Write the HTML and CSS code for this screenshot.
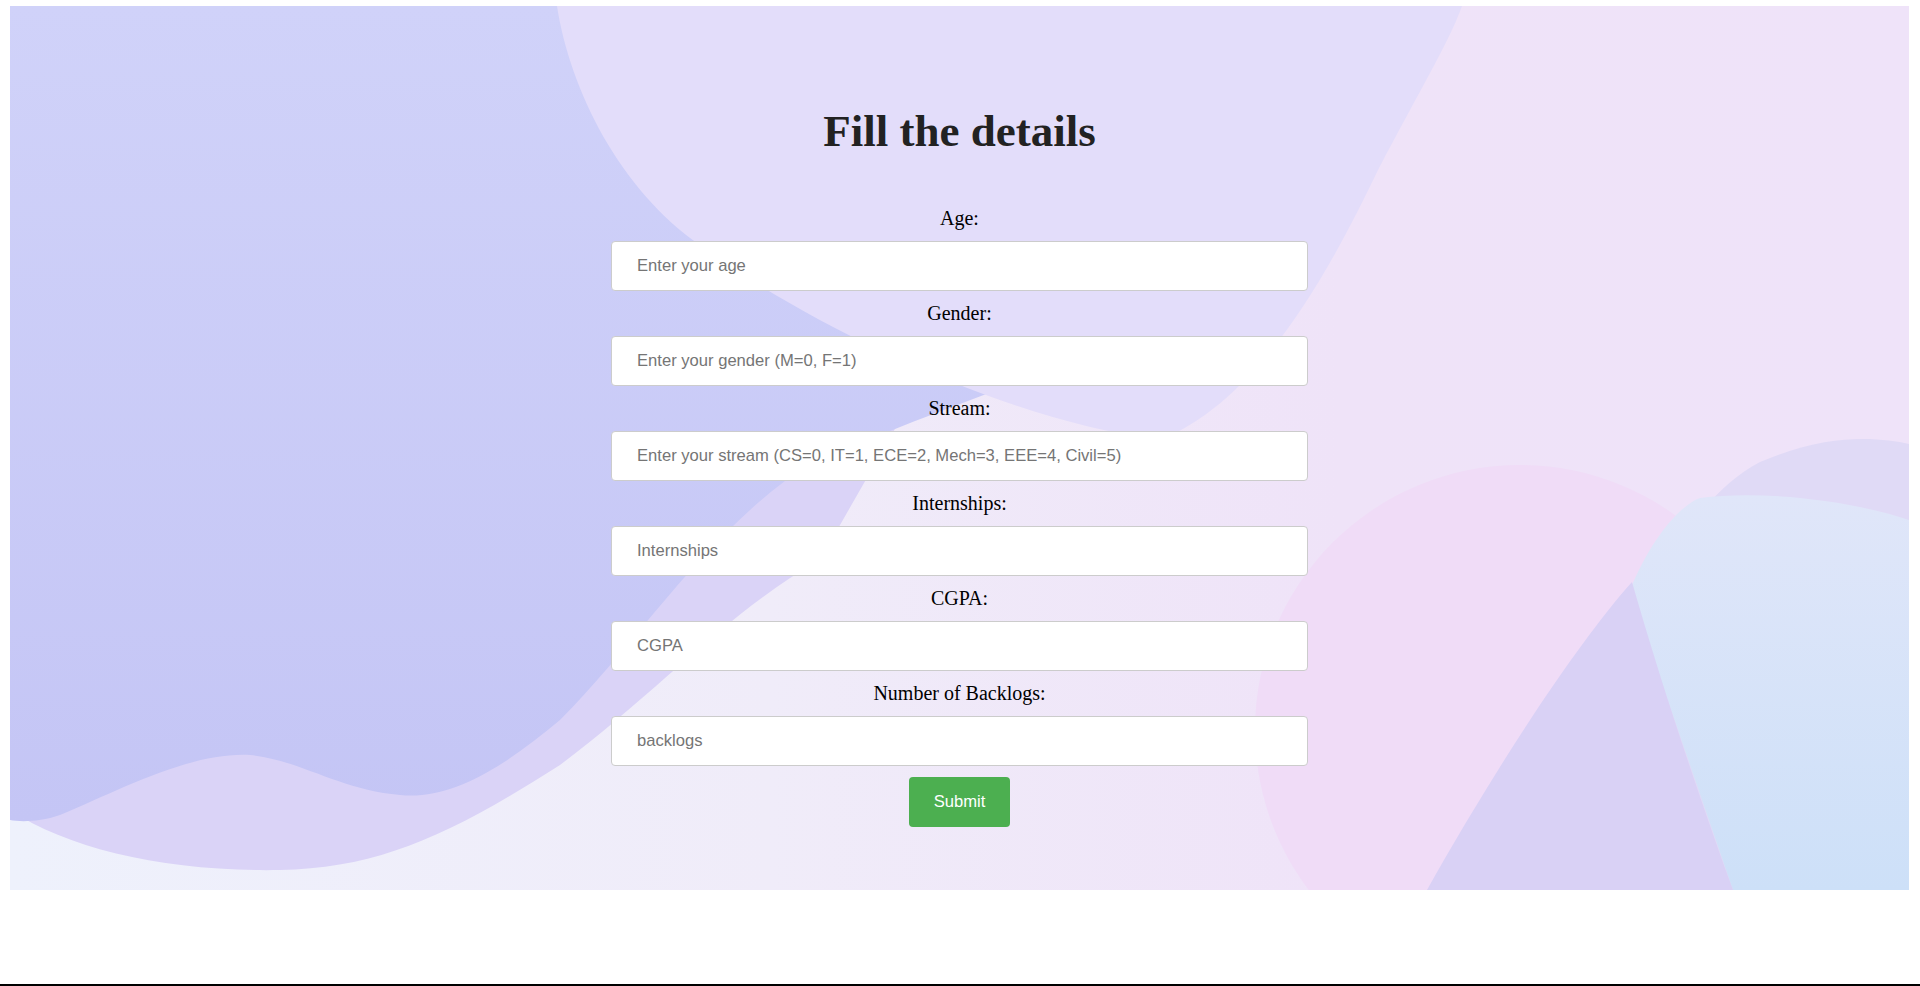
FILE: index.html
```html
<!DOCTYPE html>
<html lang="en">
<head>
<meta charset="utf-8">
<title>Placement Prediction</title>
<link rel="stylesheet" href="styles.css">
</head>
<body>
<div class="page">
  <div class="hero">
    <svg class="hero-bg" viewBox="10 6 1899 884" preserveAspectRatio="none" aria-hidden="true">
      <defs>
        <linearGradient id="base" x1="0" y1="0" x2="1" y2="0">
          <stop offset="0" stop-color="#eef1fc"/>
          <stop offset="0.4" stop-color="#f0ecf9"/>
          <stop offset="0.7" stop-color="#efe3f8"/>
          <stop offset="1" stop-color="#efe3f9"/>
        </linearGradient>
        <linearGradient id="dark" x1="0" y1="0" x2="0" y2="1">
          <stop offset="0" stop-color="#d0d2f9"/>
          <stop offset="1" stop-color="#c4c5f5"/>
        </linearGradient>
        <linearGradient id="blue" x1="0" y1="0" x2="0" y2="1">
          <stop offset="0" stop-color="#e0e6f9"/>
          <stop offset="1" stop-color="#cde0f8"/>
        </linearGradient>
      </defs>
      <rect x="10" y="6" width="1899" height="884" fill="url(#base)"/>
      <circle cx="1520" cy="730" r="265" fill="#f0dcf7"/>
      <path d="M10,810 C70,850 170,872 280,870 C380,868 450,835 560,765 C660,690 730,610 820,560 L900,420 L10,420 Z" fill="#dad3f7"/>
      <path d="M10,6 H1200 V300 C1100,360 900,420 800,470 C700,540 640,640 560,720 C500,770 450,800 400,795 C340,790 300,760 250,755 C190,752 120,790 60,815 C40,822 20,822 10,820 Z" fill="url(#dark)"/>
      <path d="M557,6 C570,90 620,190 700,245 C800,320 1000,420 1160,440 C1260,400 1330,270 1378,170 C1420,90 1450,40 1462,6 Z" fill="#e3ddfa"/>
      <path d="M1600,890 C1620,700 1650,520 1760,462 C1830,432 1880,438 1909,444 V890 Z" fill="#e0daf6"/>
      <path d="M1630,590 C1650,540 1680,505 1700,498 C1760,490 1850,500 1909,520 V890 H1733 Z" fill="url(#blue)"/>
      <path d="M1427,890 C1500,760 1580,640 1632,582 C1660,680 1700,800 1733,890 Z" fill="#d9d1f5"/>
    </svg>
    <div class="content">
      <h1 class="title">Fill the details</h1>
      <form class="form">
        <label class="field-label" for="age">Age:</label>
        <input class="field" id="age" type="text" placeholder="Enter your age">
        <label class="field-label" for="gender">Gender:</label>
        <input class="field" id="gender" type="text" placeholder="Enter your gender (M=0, F=1)">
        <label class="field-label" for="stream">Stream:</label>
        <input class="field" id="stream" type="text" placeholder="Enter your stream (CS=0, IT=1, ECE=2, Mech=3, EEE=4, Civil=5)">
        <label class="field-label" for="intern">Internships:</label>
        <input class="field" id="intern" type="text" placeholder="Internships">
        <label class="field-label" for="cgpa">CGPA:</label>
        <input class="field" id="cgpa" type="text" placeholder="CGPA">
        <label class="field-label" for="backlogs">Number of Backlogs:</label>
        <input class="field" id="backlogs" type="text" placeholder="backlogs">
        <button class="submit" type="submit">Submit</button>
      </form>
    </div>
  </div>
</div>
<div class="rule"></div>
</body>
</html>
```

FILE: styles.css
```css
html, body {
  margin: 0;
  padding: 0;
  background: #ffffff;
}

body {
  font-family: "Liberation Serif", "Times New Roman", serif;
  color: #000;
}

.page {
  padding: 6px 11px 0 10px;
}

.hero {
  position: relative;
  height: 884px;
  overflow: hidden;
}

.hero-bg {
  position: absolute;
  left: 0;
  top: 0;
  width: 100%;
  height: 100%;
  display: block;
}

.content {
  position: relative;
  width: 697px;
  margin: 0 auto;
  padding-top: 99px;
}

.title {
  margin: 0 0 50px;
  font-family: "Liberation Serif", "Times New Roman", serif;
  font-weight: 700;
  font-size: 45px;
  line-height: normal;
  text-align: center;
  color: #222;
}

.form {
  display: flex;
  flex-direction: column;
  margin: 0;
}

.field-label {
  display: block;
  font-size: 20px;
  line-height: 23px;
  text-align: center;
}

.field {
  display: block;
  box-sizing: border-box;
  width: 100%;
  height: 50px;
  margin: 11px 0;
  padding: 0 25px;
  border: 1px solid #ccc;
  border-radius: 4px;
  background: #fff;
  font-family: "Liberation Sans", Arial, sans-serif;
  font-size: 16.6px;
  color: #333;
  outline: none;
}

.field::placeholder {
  color: #757575;
}

.submit {
  align-self: center;
  box-sizing: border-box;
  height: 50px;
  padding: 0 25px;
  border: none;
  border-radius: 4px;
  background: #4caf50;
  color: #fff;
  font-family: "Liberation Sans", Arial, sans-serif;
  font-size: 16.6px;
  cursor: pointer;
}

.rule {
  margin-top: 94px;
  border-top: 2px solid #000;
}
```
